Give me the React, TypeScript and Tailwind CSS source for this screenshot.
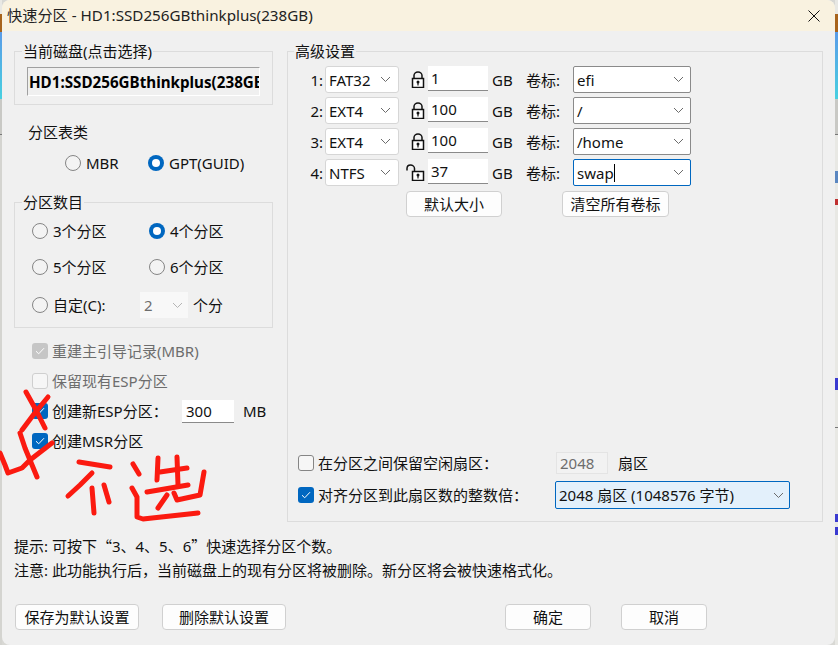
import type { ReactNode } from 'react';

const Chevron = ({ color = '#6b6b6b' }: { color?: string }) => (
  <svg width="11" height="7" viewBox="0 0 11 7" fill="none" className="shrink-0">
    <path d="M1 1l4.5 4.5L10 1" stroke={color} strokeWidth="1" />
  </svg>
);

const Radio = ({ on, label, className = '' }: { on?: boolean; label: string; className?: string }) => (
  <div className={`flex items-center ${className}`}>
    {on ? (
      <span className="flex h-4 w-4 shrink-0 items-center justify-center rounded-full bg-[#0067c0]">
        <span className="h-2 w-2 rounded-full bg-white" />
      </span>
    ) : (
      <span className="h-4 w-4 shrink-0 rounded-full border border-[#858585] bg-[#f3f3f3]" />
    )}
    <span className="ml-[5px] whitespace-nowrap">{label}</span>
  </div>
);

const Check = ({ mode }: { mode: 'on' | 'off' | 'dis-on' | 'dis-off' }) => {
  if (mode === 'off')
    return <span className="h-4 w-4 shrink-0 rounded-[3px] border border-[#858585] bg-[#f6f6f6]" />;
  if (mode === 'dis-off')
    return <span className="h-4 w-4 shrink-0 rounded-[3px] border border-[#cfcfcf] bg-[#f6f6f6]" />;
  return (
    <span className={`flex h-4 w-4 shrink-0 items-center justify-center rounded-[3px] ${mode === 'on' ? 'bg-[#0067c0]' : 'bg-[#c6c6c6]'}`}>
      <svg width="10" height="8" viewBox="0 0 10 8" fill="none">
        <path d="M1 4.2l2.7 2.6L9 1.2" stroke="white" strokeWidth="1" />
      </svg>
    </span>
  );
};

const Btn = ({ children, className = '' }: { children: ReactNode; className?: string }) => (
  <div className={`flex h-[26px] items-center justify-center rounded-[4px] border border-[#d0d0d0] bg-[#fdfdfd] ${className}`}>
    {children}
  </div>
);

const Lock = ({ open }: { open?: boolean }) => (
  <svg width="19" height="17" viewBox="0 0 19 17" fill="none">
    <rect x="6.5" y="7.5" width="11" height="9" fill="white" stroke="#111" strokeWidth="1.5" />
    {open ? (
      <path d="M1 6.5V4.5C1 2.5 2.5 1 4.5 1S8.500 2.500 8.500 4.500V7.500" stroke="#111" strokeWidth="1.5" />
    ) : (
      <path d="M8 7.500V4.500C8 2.500 9.800 1 12 1S16 2.500 16 4.500V7.500" stroke="#111" strokeWidth="1.5" />
    )}
    <circle cx="12" cy="11" r="1.500" fill="#111" />
    <path d="M12 11v3.500" stroke="#111" strokeWidth="1.200" />
  </svg>
);

const Select = ({ text }: { text: string }) => (
  <div className="flex h-[27px] w-[74px] items-center justify-between rounded-[3px] border border-[#d6d6d6] bg-white pl-[3px] pr-[7px]">
    <span>{text}</span>
    <Chevron />
  </div>
);

const rows = [
  { n: '1:', fs: 'FAT32', size: '1', label: 'efi' },
  { n: '2:', fs: 'EXT4', size: '100', label: '/' },
  { n: '3:', fs: 'EXT4', size: '100', label: '/home' },
  { n: '4:', fs: 'NTFS', size: '37', label: 'swap', open: true },
];

export default function App() {
  return (
    <div
      className="flex h-[645px] w-[838px] overflow-hidden bg-[#d8d8d4] text-[15px] leading-5 text-[#111]"
      style={{ fontFamily: '"Noto Sans", "Noto Sans CJK SC", sans-serif' }}
    >
      {/* left sliver of the app behind */}
      <div className="flex w-[2px] shrink-0 flex-col">
        <div className="h-[14px] bg-[#e8e8e4]" />
        <div className="h-[18px] bg-[#a8641c]" />
        <div className="h-[67px] bg-[linear-gradient(#5a9be8,#48d0e0)]" />
        <div className="h-[35px] bg-[#c9c9c5]" />
        <div className="h-[1px] bg-[#777]" />
        <div className="flex-1 bg-[#d4d4d0]" />
      </div>

      {/* dialog */}
      <div className="relative flex w-[833px] shrink-0 flex-col rounded-lg bg-[#f0f0f0]">
        <div className="flex h-[31px] shrink-0 items-center justify-between rounded-t-lg bg-[#f9f2e0] pl-[5px] pr-[15px] text-[#222]">
          <span className="pb-[2px] text-[15.200px]">快速分区 - HD1:SSD256GBthinkplus(238GB)</span>
          <svg width="12" height="12" viewBox="0 0 12 12" fill="none">
            <path d="M0.500 0.500l11 11M11.500 0.500l-11 11" stroke="#111" strokeWidth="1" />
          </svg>
        </div>

        <div className="flex h-[491px] shrink-0 pl-3 pt-[10px]">
          {/* left column */}
          <div className="flex w-[259px] shrink-0 flex-col">
            <fieldset className="border border-[#dcdcdc] pb-[8px]">
              <legend className="ml-[7px] px-px">当前磁盘(点击选择)</legend>
              <div className="ml-[12px] mt-[6px] h-[29px] w-[233px] overflow-hidden whitespace-nowrap border border-b-white border-l-[#a0a0a0] border-r-white border-t-[#a0a0a0] pl-[1px] text-[15.200px] font-bold leading-[28px] text-black">
                HD1:SSD256GBthinkplus(238GB)
              </div>
            </fieldset>

            <div className="ml-[14px] mt-[17px]">分区表类</div>
            <div className="mt-[11px] flex pl-[51px]">
              <Radio label="MBR" className="w-[83px]" />
              <Radio on label="GPT(GUID)" />
            </div>

            <fieldset className="mt-[19px] h-[136px] border border-[#dcdcdc]">
              <legend className="ml-[7px] px-px">分区数目</legend>
              <div className="ml-[17px] mt-[6px] flex h-[26px] items-center">
                <Radio label="3个分区" className="w-[117px]" />
                <Radio on label="4个分区" />
              </div>
              <div className="ml-[17px] mt-[10px] flex h-[26px] items-center">
                <Radio label="5个分区" className="w-[117px]" />
                <Radio label="6个分区" />
              </div>
              <div className="ml-[17px] mt-[12px] flex h-[26px] items-center">
                <Radio label="自定(C):" className="w-[108px]" />
                <div className="flex h-[26px] w-[48px] items-center justify-between bg-[#f8f8f8] pl-[4px] pr-[5px] text-[#6d6d6d]">
                  <span>2</span>
                  <Chevron color="#b5b5b5" />
                </div>
                <span className="ml-[5px]">个分</span>
              </div>
            </fieldset>

            <div className="ml-[18px] mt-[8px]">
              <div className="flex h-[30px] items-center gap-[4px] text-[#6d6d6d]">
                <Check mode="dis-on" />
                重建主引导记录(MBR)
              </div>
              <div className="flex h-[30px] items-center gap-[4px] text-[#6d6d6d]">
                <Check mode="dis-off" />
                保留现有ESP分区
              </div>
              <div className="flex h-[30px] items-center gap-[4px]">
                <Check mode="on" />
                <span className="w-[126px]">创建新ESP分区：</span>
                <div className="h-[23px] w-[52px] border-b border-b-[#8a8a8a] bg-white pl-[4px] leading-[22px]">300</div>
                <span className="ml-[5px]">MB</span>
              </div>
              <div className="flex h-[30px] items-center gap-[4px]">
                <Check mode="on" />
                创建MSR分区
              </div>
            </div>
          </div>

          {/* right group */}
          <fieldset className="ml-[14px] flex h-[481px] w-[536px] shrink-0 flex-col border border-[#dcdcdc]">
            <legend className="ml-[6px] px-px">高级设置</legend>
            <div className="mt-[5px] flex flex-col gap-[4px]">
              {rows.map((r) => (
                <div key={r.n} className="flex h-[27px] items-center">
                  <span className="w-[37px] pr-[2px] text-right">{r.n}</span>
                  <Select text={r.fs} />
                  <span className="flex w-[29px] justify-end pr-[3px]">
                    <Lock open={r.open} />
                  </span>
                  <div className="h-[25px] w-[60px] self-start border-b border-b-[#8a8a8a] bg-white pl-[3px] leading-[24px]">{r.size}</div>
                  <span className="ml-[4px] w-[34px]">GB</span>
                  <span className="w-[47px]">卷标:</span>
                  <div className={`flex h-[27px] w-[118px] items-center justify-between rounded-[2px] border bg-white pl-[3px] pr-[6px] ${r.open ? 'border-[#0067c0]' : 'border-[#8a8a8a]'}`}>
                    <span className="flex items-center">
                      {r.label}
                      {r.open && <span className="h-[18px] w-px bg-black" />}
                    </span>
                    <Chevron />
                  </div>
                </div>
              ))}
            </div>
            <div className="mt-[5px] flex pl-[118px]">
              <Btn className="w-[96px]">默认大小</Btn>
              <Btn className="ml-[60px] w-[107px]">清空所有卷标</Btn>
            </div>

            <div className="mt-[235px] flex h-[22px] items-center pl-[10px]">
              <Check mode="off" />
              <span className="ml-[4px] w-[238px]">在分区之间保留空闲扇区：</span>
              <div className="h-[22px] w-[52px] border border-[#e4e4e4] bg-[#f2f2f2] pl-[3px] leading-[20px] text-[#6d6d6d]">2048</div>
              <span className="ml-[10px]">扇区</span>
            </div>
            <div className="mt-[7px] flex h-[28px] items-center pl-[10px]">
              <Check mode="on" />
              <span className="ml-[4px] w-[237px]">对齐分区到此扇区数的整数倍：</span>
              <div className="flex h-[28px] w-[235px] items-center justify-between rounded-[2px] border border-[#0067c0] bg-[#e3f0fb] pl-[3px] pr-[5px]">
                <span>2048 扇区 (1048576 字节)</span>
                <Chevron />
              </div>
            </div>
          </fieldset>
        </div>

        <div className="mt-[14px] pl-3">
          提示: 可按下<span className="font-['Noto_Sans_CJK_SC']">“</span>3、4、5、6<span className="font-['Noto_Sans_CJK_SC']">”</span>快速选择分区个数。
        </div>
        <div className="mt-[4px] pl-3">注意: 此功能执行后，当前磁盘上的现有分区将被删除。新分区将会被快速格式化。</div>

        <div className="mt-[24px] flex pl-[13px]">
          <Btn className="w-[124px]">保存为默认设置</Btn>
          <Btn className="ml-[23px] w-[124px]">删除默认设置</Btn>
          <Btn className="ml-[219px] w-[86px] border-[#0067c0]">确定</Btn>
          <Btn className="ml-[30px] w-[86px]">取消</Btn>
        </div>
      </div>

      {/* right sliver of the app behind */}
      <div className="flex w-[3px] shrink-0 flex-col bg-[#e8e8e4]">
        <div className="h-[14px]" />
        <div className="h-[18px] bg-[#a8641c]" />
        <div className="h-[67px] bg-[linear-gradient(#5a9be8,#48d0e0)]" />
        <div className="h-[35px] bg-[#c9c9c5]" />
        <div className="h-[1px] bg-[#777]" />
        <div className="h-[36px]" />
        <div className="h-[12px] bg-[#5a86c0]" />
        <div className="h-[16px]" />
        <div className="h-[6px] bg-[#c03030]" />
        <div className="h-[173px]" />
        <div className="h-[12px] bg-[#3a3ad0]" />
        <div className="h-[37px]" />
        <div className="h-[1px] bg-[#777]" />
        <div className="h-[86px]" />
        <div className="h-[8px] bg-[#3a3ad0]" />
        <div className="h-[5px]" />
        <div className="h-[8px] bg-[#3a3ad0]" />
      </div>

      {/* red marker scribbles on top of the screenshot */}
      <svg className="pointer-events-none absolute left-0 top-0" width="838" height="645" fill="none" stroke="#fb1a10" strokeWidth="5" strokeLinecap="round" strokeLinejoin="round">
        <path d="M26 392L36 410L45 428" />
        <path d="M48 397L34 414L22 430" />
        <path d="M20 433L25 448L37 477" />
        <path d="M52 443L30 460L22 468L8 473L5 465L0 453" />
        <path d="M79 462L110 467" />
        <path d="M92 473L80 485L68 496" />
        <path d="M92 488L94 513" />
        <path d="M104 485L109 502" />
        <path d="M133 464L139 474" />
        <path d="M132 488L137 497L137 517L143 519L198 513" />
        <path d="M158 458L157 480" />
        <path d="M160 472L187 468" />
        <path d="M177 457L178 485" />
        <path d="M147 492L188 485" />
        <path d="M204 472L200 495L177 500L174 493" />
        <path d="M167 495L158 508" />
      </svg>
    </div>
  );
}
